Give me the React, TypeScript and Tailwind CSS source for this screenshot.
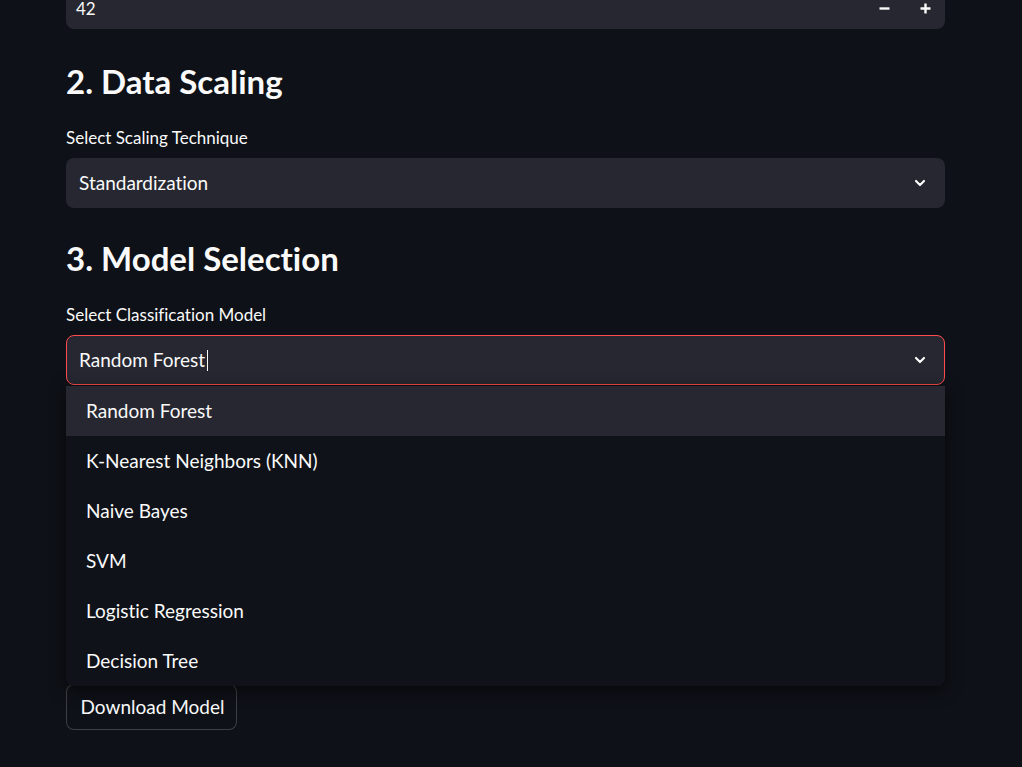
import React from 'react';

const models = [
  'Random Forest',
  'K-Nearest Neighbors (KNN)',
  'Naive Bayes',
  'SVM',
  'Logistic Regression',
  'Decision Tree',
];

const Chevron = () => (
  <svg width="16" height="16" viewBox="0 0 24 24" fill="none" stroke="#fafafa" strokeWidth="3.2" strokeLinecap="round" strokeLinejoin="round">
    <path d="M6 9l6 6 6-6" />
  </svg>
);

const App = () => {
  return (
    <div
      className="h-[767px] w-full overflow-hidden bg-[#0e1117] text-[#fafafa] [font-variant-ligatures:none]"
      style={{ fontFamily: 'Lato, "Noto Sans", sans-serif' }}
    >
      <div className="ml-[66px] flex w-[879px] flex-col">
        {/* number input, scrolled mostly out of view */}
        <div className="-mt-[13px] flex h-[42px] items-center rounded-lg bg-[#262730] pl-[10px] pr-[14px]">
          <span className="flex-1 text-[17px] leading-none">42</span>
          <svg className="mr-[30px]" width="11" height="11" viewBox="0 0 11 11">
            <path d="M0.5 5.5h10" stroke="#fafafa" strokeWidth="2.4" />
          </svg>
          <svg width="11" height="11" viewBox="0 0 11 11">
            <path d="M0.5 5.5h10M5.5 0.5v10" stroke="#fafafa" strokeWidth="2.4" />
          </svg>
        </div>

        <h2 className="mt-[28px] text-[33px] font-bold leading-[48px]">2. Data Scaling</h2>
        <label className="mt-[22px] text-[17px] leading-[22px]">Select Scaling Technique</label>
        <div className="mt-[9px] flex h-[50px] items-center justify-between rounded-lg bg-[#262730] pl-[13px] pr-[17px]">
          <span className="text-[19px]">Standardization</span>
          <Chevron />
        </div>

        <h2 className="mt-[26px] text-[33px] font-bold leading-[48px]">3. Model Selection</h2>
        <label className="mt-[22px] text-[17px] leading-[22px]">Select Classification Model</label>
        <div className="relative mt-[9px]">
          <div className="flex h-[50px] items-center justify-between rounded-lg border border-[#ff4b4b] bg-[#262730] pl-[12px] pr-[16px]">
            <span className="flex items-center text-[19px]">
              Random Forest
              <span className="ml-[2px] inline-block h-[21px] w-px bg-[#fafafa]" />
            </span>
            <Chevron />
          </div>

          {/* open dropdown list */}
          <div className="absolute left-0 right-0 top-[51px] z-10 flex flex-col rounded-b-lg bg-[#0f1219] shadow-[0_4px_16px_rgba(0,0,0,0.6)]">
            {models.map((m, i) => (
              <div
                key={m}
                className={
                  'flex h-[50px] items-center pl-[20px] text-[19px] ' +
                  (i === 0 ? 'bg-[#262730]' : '')
                }
              >
                {m}
              </div>
            ))}
          </div>
        </div>

        {/* content hidden behind the dropdown */}
        <div className="mt-[235px] h-[36px] rounded-lg border border-[#262730]" />

        <button className="mt-[28px] h-[46px] w-[171px] rounded-lg border border-[rgba(250,250,250,0.2)] bg-[#0e1117] pl-[2px] text-[19px]">
          Download Model
        </button>
      </div>
    </div>
  );
};

export default App;
